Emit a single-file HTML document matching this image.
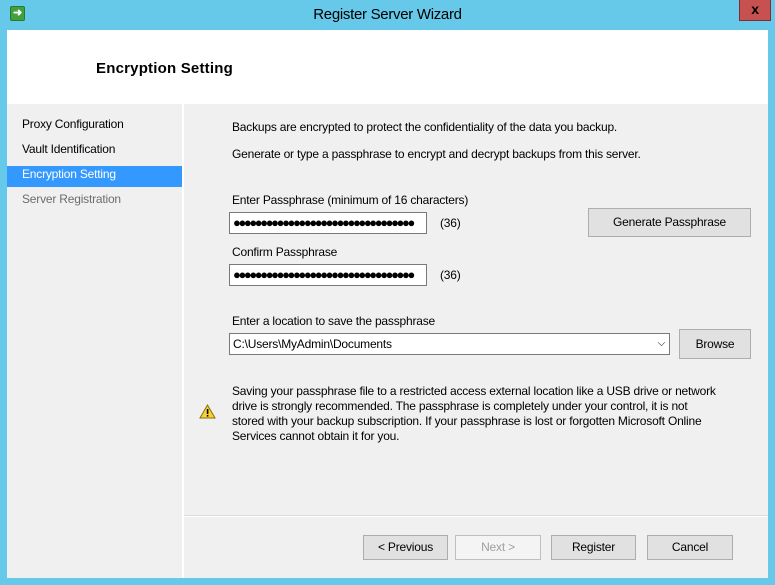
<!DOCTYPE html>
<html><head><style>
*{margin:0;padding:0;box-sizing:border-box}
body{width:775px;height:585px;background:#66c9ea;font-family:"Liberation Sans",sans-serif;font-size:12px;letter-spacing:-0.2px;color:#000;position:relative;overflow:hidden}
.a{position:absolute}
.btn{position:absolute;background:#e1e1e1;border:1px solid #adadad;text-align:center;line-height:23px;font-size:12px}
.inp{position:absolute;background:#fff;border:1px solid #7a7a7a;height:22px;line-height:20px;padding-left:3px;font-size:12px;overflow:hidden;white-space:nowrap}
.dots{font-size:13px;letter-spacing:-2.4px;font-weight:bold}
</style></head><body>
<div class="a" style="left:10px;top:6px;width:15px;height:15px;background:#3fa23f;border:1px solid #2a7a2a;border-radius:2px;color:#fff;font-size:11px;line-height:13px;text-align:center;font-weight:bold">➜</div>
<div class="a" style="left:0;top:6px;width:775px;text-align:center;font-size:15px;letter-spacing:-0.3px">Register Server Wizard</div>
<div class="a" style="left:739px;top:0;width:32px;height:21px;background:#c75050;border:1px solid #7a3030;border-top:none;text-align:center;font-weight:bold;font-size:14px;line-height:18px">x</div>
<div class="a" style="left:7px;top:30px;width:761px;height:548px;background:#f0f0f0"></div>
<div class="a" style="left:7px;top:30px;width:761px;height:74px;background:#fff"></div>
<div class="a" style="left:96px;top:60px;font-size:15px;font-weight:bold;letter-spacing:0.2px">Encryption Setting</div>
<div class="a" style="left:182px;top:104px;width:2px;height:474px;background:#fff"></div>
<div class="a" style="left:22px;top:117px">Proxy Configuration</div>
<div class="a" style="left:22px;top:142px">Vault Identification</div>
<div class="a" style="left:7px;top:166px;width:175px;height:21px;background:#3399ff"></div>
<div class="a" style="left:22px;top:167px;color:#fff">Encryption Setting</div>
<div class="a" style="left:22px;top:192px;color:#6d6d6d">Server Registration</div>
<div class="a" style="left:232px;top:120px">Backups are encrypted to protect the confidentiality of the data you backup.</div>
<div class="a" style="left:232px;top:147px">Generate or type a passphrase to encrypt and decrypt backups from this server.</div>
<div class="a" style="left:232px;top:193px">Enter Passphrase (minimum of 16 characters)</div>
<div class="inp dots" style="left:229px;top:212px;width:198px">●●●●●●●●●●●●●●●●●●●●●●●●●●●●●●●●●</div>
<div class="a" style="left:440px;top:216px">(36)</div>
<div class="btn" style="left:588px;top:208px;width:163px;height:29px;line-height:27px">Generate Passphrase</div>
<div class="a" style="left:232px;top:245px">Confirm Passphrase</div>
<div class="inp dots" style="left:229px;top:264px;width:198px">●●●●●●●●●●●●●●●●●●●●●●●●●●●●●●●●●</div>
<div class="a" style="left:440px;top:268px">(36)</div>
<div class="a" style="left:232px;top:314px">Enter a location to save the passphrase</div>
<div class="inp" style="left:229px;top:333px;width:441px">C:\Users\MyAdmin\Documents<span style="position:absolute;right:4px;top:0;font-size:10px">⌵</span></div>
<div class="btn" style="left:679px;top:329px;width:72px;height:30px;line-height:28px">Browse</div>
<svg class="a" style="left:199px;top:404px" width="17" height="15" viewBox="0 0 17 15"><path d="M8.5 1L16 14H1Z" fill="#f5d33a" stroke="#8a6d00"/><rect x="7.8" y="5" width="1.6" height="5" fill="#000"/><rect x="7.8" y="11" width="1.6" height="1.6" fill="#000"/></svg>
<div class="a" style="left:232px;top:384px;width:487px;line-height:15px">Saving your passphrase file to a restricted access external location like a USB drive or network drive is strongly recommended. The passphrase is completely under your control, it is not stored with your backup subscription. If your passphrase is lost or forgotten Microsoft Online Services cannot obtain it for you.</div>
<div class="a" style="left:184px;top:515px;width:584px;height:1px;background:#dcdcdc"></div>
<div class="a" style="left:184px;top:516px;width:584px;height:1px;background:#fff"></div>
<div class="btn" style="left:363px;top:535px;width:85px;height:25px">&lt; Previous</div>
<div class="btn" style="left:455px;top:535px;width:86px;height:25px;color:#a0a0a0;background:#f4f4f4;border-color:#bfbfbf">Next &gt;</div>
<div class="btn" style="left:551px;top:535px;width:85px;height:25px">Register</div>
<div class="btn" style="left:647px;top:535px;width:86px;height:25px">Cancel</div>
</body></html>
